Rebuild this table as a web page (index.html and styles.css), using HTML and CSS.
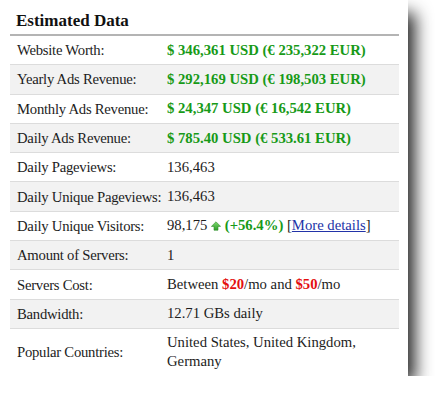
FILE: index.html
```html
<!DOCTYPE html>
<html>
<head>
<meta charset="utf-8">
<link rel="stylesheet" href="styles.css">
</head>
<body>
<div class="card">
  <h2 class="title">Estimated Data</h2>
  <div class="rows">
    <div class="row"><div class="label">Website Worth:</div><div class="value"><b class="green">$ 346,361 USD (€ 235,322 EUR)</b></div></div>
    <div class="row alt"><div class="label">Yearly Ads Revenue:</div><div class="value"><b class="green">$ 292,169 USD (€ 198,503 EUR)</b></div></div>
    <div class="row"><div class="label">Monthly Ads Revenue:</div><div class="value"><b class="green">$ 24,347 USD (€ 16,542 EUR)</b></div></div>
    <div class="row alt"><div class="label">Daily Ads Revenue:</div><div class="value"><b class="green">$ 785.40 USD (€ 533.61 EUR)</b></div></div>
    <div class="row"><div class="label">Daily Pageviews:</div><div class="value">136,463</div></div>
    <div class="row alt"><div class="label">Daily Unique Pageviews:</div><div class="value">136,463</div></div>
    <div class="row"><div class="label">Daily Unique Visitors:</div><div class="value">98,175 <svg class="arrow" width="10" height="10" viewBox="0 0 10 10"><defs><linearGradient id="g" x1="0" y1="0" x2="0" y2="1"><stop offset="0" stop-color="#7fd86f"/><stop offset="1" stop-color="#2e9e2a"/></linearGradient></defs><path d="M5 0.8 L9.6 5.4 H7 V9.2 H3 V5.4 H0.4 Z" fill="url(#g)" stroke="#2f8f2a" stroke-width="0.6"/></svg> <b class="green">(+56.4%)</b> [<a href="#" class="link">More details</a>]</div></div>
    <div class="row alt"><div class="label">Amount of Servers:</div><div class="value">1</div></div>
    <div class="row"><div class="label">Servers Cost:</div><div class="value">Between <b class="red">$20</b>/mo and <b class="red">$50</b>/mo</div></div>
    <div class="row alt"><div class="label">Bandwidth:</div><div class="value">12.71 GBs daily</div></div>
    <div class="row last"><div class="label">Popular Countries:</div><div class="value">United States, United Kingdom, Germany</div></div>
  </div>
</div>
</body>
</html>
```

FILE: styles.css
```css
html, body {
  margin: 0;
  padding: 0;
  background: #fff;
}
body {
  font-family: "Liberation Serif", "Times New Roman", serif;
  font-size: 14.7px;
  color: #1c1c1c;
}
.card {
  width: 408px;
  height: 376px;
  box-sizing: border-box;
  padding: 0 9px 0 10px;
  background: #fff;
  box-shadow: 10px 10px 16px -3px rgba(0, 0, 0, 0.85);
}
.title {
  margin: 0;
  padding: 11px 0 0 6px;
  height: 23px;
  font-size: 17px;
  line-height: 20px;
  font-weight: bold;
  color: #111;
  border-bottom: 2px solid #b4b4b4;
}
.rows {
  display: flex;
  flex-direction: column;
}
.row {
  display: flex;
  align-items: center;
  height: 29.3px;
  box-sizing: border-box;
  border-bottom: 1px solid #dcdcdc;
  line-height: 18px;
  background: #fff;
}
.row.alt {
  background: #f2f2f2;
}
.row.last {
  height: 47px;
  border-bottom: none;
}
.label {
  width: 150px;
  flex: none;
  box-sizing: border-box;
  padding-left: 7px;
  white-space: nowrap;
  letter-spacing: -0.25px;
}
.value {
  flex: 1;
  padding-left: 7px;
  line-height: 19px;
}
.green {
  color: #179a17;
}
.red {
  color: #e41010;
}
.link {
  color: #2233a8;
  text-decoration: underline;
}
.arrow {
  vertical-align: -1px;
}
```
